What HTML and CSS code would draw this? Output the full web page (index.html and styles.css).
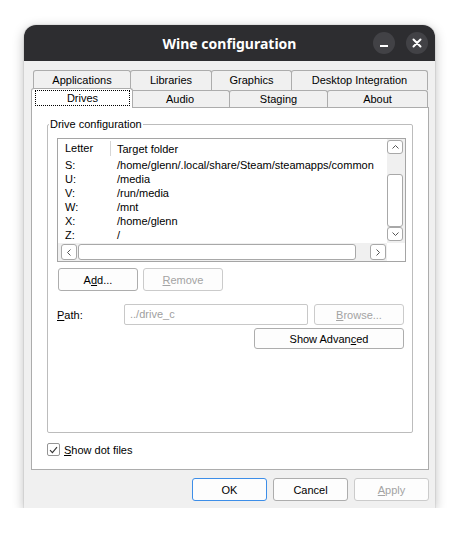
FILE: index.html
```html
<!DOCTYPE html>
<html lang="en">
<head>
    <meta charset="UTF-8">
    <title>Wine configuration</title>
    <link rel="stylesheet" href="styles.css">
</head>
<body>
    <div class="window">
        <div class="titlebar">
            <span></span>
            <span class="title">Wine configuration</span>
            <div class="wm-buttons">
                <button class="wm-btn" title="Minimize">
                    <svg width="10" height="10" viewBox="0 0 10 10"><rect x="1" y="7" width="8" height="2" fill="#fff"/></svg>
                </button>
                <button class="wm-btn" title="Close">
                    <svg width="10" height="10" viewBox="0 0 10 10"><path d="M1.5 1.5 L8.5 8.5 M8.5 1.5 L1.5 8.5" stroke="#fff" stroke-width="2" stroke-linecap="round"/></svg>
                </button>
            </div>
        </div>

        <div class="client">
            <div class="tab-row back">
                <div class="tab">Applications</div>
                <div class="tab">Libraries</div>
                <div class="tab">Graphics</div>
                <div class="tab">Desktop Integration</div>
            </div>
            <div class="tab-row front">
                <div class="tab selected"><span class="focus">Drives</span></div>
                <div class="tab">Audio</div>
                <div class="tab">Staging</div>
                <div class="tab">About</div>
            </div>

            <div class="panel">
                <fieldset class="group">
                    <legend>Drive configuration</legend>
                    <div class="group-body">
                        <div class="listview">
                            <div class="list-main">
                                <div class="list-header">
                                    <span class="col-letter">Letter</span>
                                    <span class="col-target">Target folder</span>
                                </div>
                                <div class="list-row"><span class="col-letter">S:</span><span class="col-target">/home/glenn/.local/share/Steam/steamapps/common</span></div>
                                <div class="list-row"><span class="col-letter">U:</span><span class="col-target">/media</span></div>
                                <div class="list-row"><span class="col-letter">V:</span><span class="col-target">/run/media</span></div>
                                <div class="list-row"><span class="col-letter">W:</span><span class="col-target">/mnt</span></div>
                                <div class="list-row"><span class="col-letter">X:</span><span class="col-target">/home/glenn</span></div>
                                <div class="list-row"><span class="col-letter">Z:</span><span class="col-target">/</span></div>
                            </div>
                            <div class="vscroll">
                                <div class="sb-btn"><svg width="7" height="4" viewBox="0 0 7 4"><polyline points="0.5,3.5 3.5,0.5 6.5,3.5" fill="none" stroke="#555"/></svg></div>
                                <div class="sb-btn thumb"></div>
                                <div class="sb-btn"><svg width="7" height="4" viewBox="0 0 7 4"><polyline points="0.5,0.5 3.5,3.5 6.5,0.5" fill="none" stroke="#555"/></svg></div>
                            </div>
                            <div class="hscroll">
                                <div class="sb-btn"><svg width="4" height="7" viewBox="0 0 4 7"><polyline points="3.5,0.5 0.5,3.5 3.5,6.5" fill="none" stroke="#555"/></svg></div>
                                <div class="sb-btn thumb"></div>
                                <div class="sb-btn"><svg width="4" height="7" viewBox="0 0 4 7"><polyline points="0.5,0.5 3.5,3.5 0.5,6.5" fill="none" stroke="#555"/></svg></div>
                            </div>
                            <div class="corner"></div>
                        </div>

                        <div class="button-row">
                            <button class="btn">A<u>d</u>d...</button>
                            <button class="btn" disabled><u>R</u>emove</button>
                        </div>
                        <div class="path-row">
                            <span class="path-label"><u>P</u>ath:</span>
                            <div class="path-input">../drive_c</div>
                            <button class="btn" disabled><u>B</u>rowse...</button>
                        </div>
                        <div class="advanced-row">
                            <button class="btn">Show Advan<u>c</u>ed</button>
                        </div>
                    </div>
                </fieldset>

                <label class="checkbox-row">
                    <span class="checkbox"><svg width="9" height="8" viewBox="0 0 9 8"><polyline points="1,4.2 3.4,6.6 8,1.2" fill="none" stroke="#333" stroke-width="1.1"/></svg></span>
                    <span><u>S</u>how dot files</span>
                </label>
            </div>

            <div class="dialog-buttons">
                <button class="btn default">OK</button>
                <button class="btn">Cancel</button>
                <button class="btn" disabled><u>A</u>pply</button>
            </div>
        </div>
    </div>
</body>
</html>
```

FILE: styles.css
```css
body {
    margin: 0;
    padding: 25px 0 0 24px;
    background: #fff;
    font-family: "Liberation Sans", Arial, sans-serif;
    font-size: 11px;
    color: #000;
}
.window {
    width: 411px;
    height: 483px;
    display: flex;
    flex-direction: column;
    background: #f0f0f0;
    border-radius: 12px 12px 0 0;
    box-shadow: 0 3px 12px rgba(0, 0, 0, 0.28), 0 0 0 1px rgba(0, 0, 0, 0.05);
    overflow: hidden;
}

/* title bar */
.titlebar {
    flex: none;
    height: 36px;
    display: grid;
    grid-template-columns: 1fr auto 1fr;
    align-items: center;
    background: #2d2d30;
}
.title {
    color: #fff;
    font-family: "Noto Sans", sans-serif;
    font-weight: bold;
    font-size: 14px;
}
.wm-buttons {
    justify-self: end;
    display: flex;
    gap: 11px;
    padding-right: 7px;
}
.wm-btn {
    width: 22px;
    height: 22px;
    padding: 0;
    border: none;
    border-radius: 50%;
    background: #424246;
    display: flex;
    align-items: center;
    justify-content: center;
}

/* dialog client area */
.client {
    flex: 1;
    display: flex;
    flex-direction: column;
    padding: 9px 6px 0 7px;
}

/* tabs */
.tab-row {
    display: flex;
    margin: 0 1px 0 2px;
}
.tab-row.back {
    height: 20px;
}
.tab-row.front {
    height: 17px;
}
.tab {
    box-sizing: border-box;
    margin-left: -1px;
    border: 1px solid #acacac;
    border-bottom: none;
    border-radius: 3px 3px 0 0;
    background: #f0f0f0;
    text-align: center;
}
.tab:first-child {
    margin-left: 0;
}
.back .tab {
    line-height: 19px;
}
.front .tab {
    line-height: 16px;
}
.back .tab:nth-child(1) { width: 98px; }
.back .tab:nth-child(2) { width: 82px; }
.back .tab:nth-child(3) { width: 81px; }
.back .tab:nth-child(4) { width: 137px; }
.front .tab:nth-child(2) { width: 100px; }
.front .tab:nth-child(3) { width: 99px; }
.front .tab:nth-child(4) { width: 101px; }
.front .tab.selected {
    position: relative;
    z-index: 2;
    align-self: flex-start;
    width: 102px;
    height: 20px;
    margin: -2px -2px 0 -2px;
    background: #fff;
}
.focus {
    display: block;
    margin: 1px 2px 0 3px;
    border: 1px dotted #000;
    line-height: 14px;
}

/* tab page */
.panel {
    box-sizing: border-box;
    height: 363px;
    padding: 9px 15px 0 15px;
    border: 1px solid #acacac;
    background: #fff;
}
.group {
    margin: 0;
    min-width: 0;
    padding: 7px 0 83px 1px;
    border: 1px solid #bcbcbc;
    border-radius: 2px;
}
.group legend {
    padding: 0 1px;
    line-height: 14px;
}
.group-body {
    padding: 0 8px;
}

/* drive list */
.listview {
    box-sizing: border-box;
    width: 349px;
    height: 124px;
    margin-right: -2px;
    display: grid;
    grid-template-columns: 1fr 18px;
    grid-template-rows: 1fr 18px;
    border: 1px solid #a5a5a5;
    background: #fff;
}
.list-main {
    overflow: hidden;
}
.list-header {
    display: flex;
    align-items: center;
    height: 19px;
}
.list-row {
    display: flex;
    height: 14px;
    line-height: 14px;
}
.col-letter {
    box-sizing: border-box;
    flex: none;
    width: 53px;
    padding-left: 7px;
}
.list-header .col-letter {
    border-right: 1px solid #d6d6d6;
    line-height: 15px;
}
.col-target {
    padding-left: 6px;
    white-space: nowrap;
}
.vscroll {
    display: flex;
    flex-direction: column;
    padding: 1px 2px 2px 0;
    background: #f0f0f0;
}
.hscroll {
    display: flex;
    gap: 1px;
    padding: 1px 1px 1px 3px;
    background: #f0f0f0;
}
.sb-btn {
    box-sizing: border-box;
    flex: none;
    display: flex;
    align-items: center;
    justify-content: center;
    border: 1px solid #a8a8a8;
    border-radius: 3px;
    background: #fff;
}
.vscroll .sb-btn {
    height: 14px;
}
.vscroll .thumb {
    height: 53px;
    margin-top: auto;
}
.hscroll .sb-btn {
    width: 16px;
}
.hscroll .thumb {
    width: 278px;
}
.hscroll .sb-btn:last-child {
    margin-left: auto;
}
.corner {
    background: #fff;
}

/* buttons */
.btn {
    box-sizing: border-box;
    height: 21px;
    padding: 0;
    font: inherit;
    color: #000;
    background: #fdfdfd;
    border: 1px solid #adadad;
    border-radius: 3px;
}
.btn:disabled {
    color: #a3a3a3;
    border-color: #cbcbcb;
}
.btn.default {
    border-color: #3d8ee8;
}
.button-row {
    display: flex;
    gap: 5px;
    margin-top: 6px;
    padding-left: 1px;
}
.button-row .btn {
    width: 80px;
    height: 23px;
}
.path-row {
    display: flex;
    align-items: center;
    margin-top: 13px;
}
.path-label {
    width: 67px;
}
.path-input {
    box-sizing: border-box;
    width: 184px;
    height: 21px;
    margin-right: 6px;
    padding-left: 5px;
    line-height: 19px;
    color: #a0a0a0;
    border: 1px solid #c8c8c8;
    border-radius: 2px;
}
.path-row .btn {
    width: 90px;
}
.advanced-row {
    display: flex;
    justify-content: flex-end;
    margin-top: 3px;
}
.advanced-row .btn {
    width: 150px;
}

/* checkbox */
.checkbox-row {
    display: flex;
    align-items: center;
    gap: 4px;
    margin-top: 10px;
}
.checkbox {
    box-sizing: border-box;
    width: 13px;
    height: 13px;
    display: flex;
    align-items: center;
    justify-content: center;
    border: 1px solid #959595;
    border-radius: 2px;
    background: #fff;
}

/* OK / Cancel / Apply */
.dialog-buttons {
    display: flex;
    justify-content: flex-end;
    gap: 6px;
    margin-top: 8px;
}
.dialog-buttons .btn {
    width: 75px;
    height: 23px;
}
```
